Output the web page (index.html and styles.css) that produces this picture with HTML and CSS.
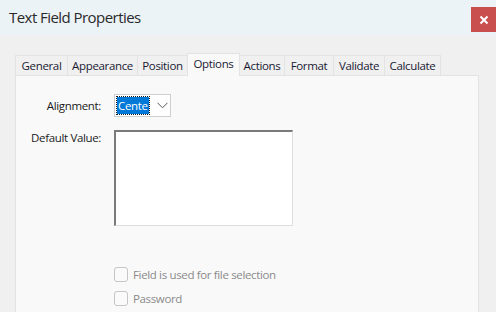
FILE: index.html
```html
<!DOCTYPE html>
<html lang="en">
  <head>
    <meta charset="UTF-8" />
    <title>Text Field Properties</title>
    <link rel="stylesheet" href="styles.css">
  </head>
  <body>
    <div class="titlebar">
      <span class="title">Text Field Properties</span>
      <div class="close">
        <svg width="10" height="10" viewBox="0 0 10 10">
          <path d="M1.5 1.5 L8.5 8.5 M8.5 1.5 L1.5 8.5" stroke="#fff" stroke-width="2" />
        </svg>
      </div>
    </div>
    <div class="dialog">
      <div class="tabs">
        <span class="tab" style="width:52px">General</span>
        <span class="tab" style="width:70px">Appearance</span>
        <span class="tab" style="width:50px">Position</span>
        <span class="tab active" style="width:53px">Options</span>
        <span class="tab" style="width:45px">Actions</span>
        <span class="tab" style="width:49px">Format</span>
        <span class="tab" style="width:51px">Validate</span>
        <span class="tab" style="width:57px">Calculate</span>
      </div>
      <div class="panel">
        <div class="row">
          <label class="label">Alignment:</label>
          <div class="select">
            <span class="selected">Cente</span>
            <svg class="chevron" width="11" height="7" viewBox="0 0 11 7">
              <path d="M0.5 0.8 L5.5 5.8 L10.5 0.8" fill="none" stroke="#555" stroke-width="1" />
            </svg>
          </div>
        </div>
        <div class="row top">
          <label class="label">Default Value:</label>
          <div class="textarea"></div>
        </div>
        <div class="checks">
          <div class="check"><span class="box"></span>Field is used for file selection</div>
          <div class="check"><span class="box"></span>Password</div>
        </div>
      </div>
    </div>
  </body>
</html>
```

FILE: styles.css
```css
body {
  margin: 0;
  background-color: #f0f0f0;
  font-family: "Open Sans", "Noto Sans", sans-serif;
  font-size: 11.5px;
  letter-spacing: -0.35px;
  color: #1b1b1b;
  height: 312px;
  overflow: hidden;
}
.titlebar {
  height: 35px;
  background-color: #ebf3f6;
  display: flex;
  justify-content: space-between;
  align-items: flex-start;
  padding-left: 9px;
}
.title {
  font-size: 15px;
  letter-spacing: -0.55px;
  line-height: 35px;
  color: #2a2a2a;
}
.close {
  width: 25px;
  height: 25px;
  margin-top: 7px;
  background-color: #c94f4f;
  display: flex;
  align-items: center;
  justify-content: center;
}
.dialog {
  padding: 18px 17px 0 15px;
}
.tabs {
  display: flex;
  align-items: flex-end;
  height: 22px;
}
.tab {
  box-sizing: border-box;
  height: 20px;
  line-height: 19px;
  text-align: center;
  border: 1px solid #e3e3e3;
  border-bottom: none;
  border-right: none;
  background-color: #f0f0f0;
  color: #1a1a33;
}
.tab:last-child {
  border-right: 1px solid #e3e3e3;
}
.tab.active {
  height: 23px;
  line-height: 20px;
  background-color: #f9f9f9;
  border-right: 1px solid #e3e3e3;
  margin-right: -1px;
  margin-bottom: -1px;
  position: relative;
  z-index: 1;
}
.panel {
  background-color: #f9f9f9;
  border: 1px solid #e3e3e3;
  border-bottom: none;
  height: 218px;
  padding-top: 18px;
}
.row {
  display: flex;
  align-items: center;
  gap: 13px;
  margin-bottom: 13px;
}
.row.top {
  align-items: flex-start;
}
.label {
  width: 85px;
  text-align: right;
}
.row.top .label {
  margin-top: 0;
}
.select {
  box-sizing: border-box;
  width: 57px;
  height: 23px;
  border: 1px solid #cfcfcf;
  background-color: #fff;
  display: flex;
  align-items: center;
  padding-left: 2px;
  gap: 8px;
}
.selected {
  background-color: #0078d7;
  color: #fff;
  outline: 1px dotted #1a1a1a;
  width: 31px;
  line-height: 17px;
  padding-left: 1px;
}
.textarea {
  box-sizing: border-box;
  width: 179px;
  height: 96px;
  background-color: #fff;
  border-top: 2px solid #7a7a7a;
  border-left: 2px solid #7a7a7a;
  border-right: 1px solid #dedede;
  border-bottom: 1px solid #dedede;
}
.checks {
  margin: 40px 0 0 98px;
  display: flex;
  flex-direction: column;
  gap: 8px;
  color: #8a8a8a;
}
.check {
  display: flex;
  align-items: center;
  gap: 5px;
  height: 16px;
}
.box {
  box-sizing: border-box;
  width: 14px;
  height: 15px;
  border: 1px solid #c6c6c6;
  border-radius: 3px;
  background-color: #fafafa;
}
```
